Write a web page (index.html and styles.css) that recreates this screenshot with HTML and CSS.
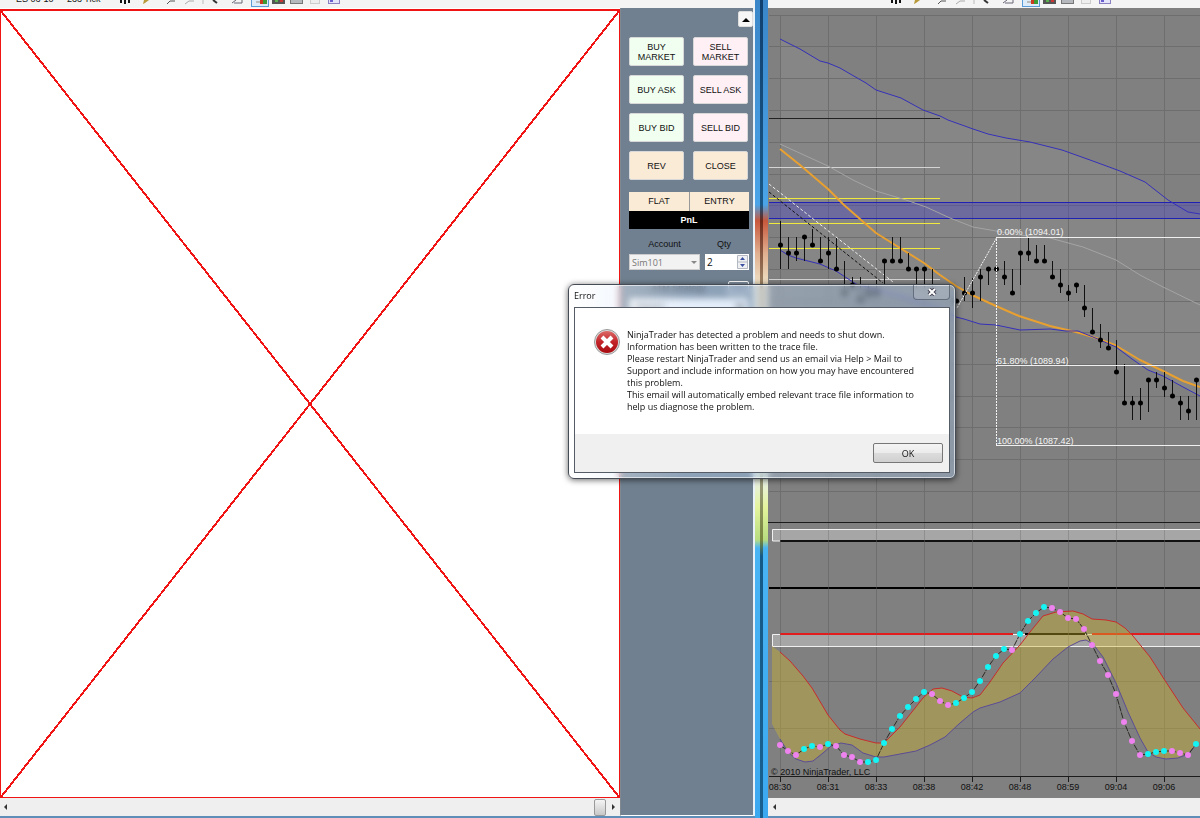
FILE: index.html
```html
<!DOCTYPE html>
<html lang="en">
<head>
  <meta charset="UTF-8" />
  <title>NinjaTrader</title>
  <meta name="viewport" content="width=device-width, initial-scale=1" />
  <link rel="stylesheet" href="styles.css">
</head>
<body>

  <svg class="defs" width="0" height="0" aria-hidden="true">
    <symbol id="tool-icons" viewBox="0 0 232 8">
      <path d="M3 0v3M7 0v4M11 0v3" stroke="#111" stroke-width="2" />
      <path d="M25 4l1-4h5l-4 3z" fill="#b89a3a" />
      <path d="M49 4l3-3h5" stroke="#555" fill="none" />
      <path d="M67 4l4-3h5" stroke="#aaa" fill="none" />
      <path d="M85 0v4" stroke="#bbb" />
      <path d="M95 0l4 3" stroke="#333" stroke-width="2" />
      <path d="M114 3l4-3M116 3h8V0" stroke="#667" fill="none" />
      <rect x="133.500" y="-4" width="17" height="10.500" fill="#dcecfb" stroke="#5b9bd8" />
      <path d="M138 1h5v2h-5z" fill="#bbb" /><path d="M142 0h3v4h-3z" fill="#cc3a22" /><path d="M145 0h4v4h-4z" fill="#3d9b35" />
      <rect x="154" y="-4" width="13" height="8" fill="#555" />
      <path d="M157 0h3v2h-3z" fill="#5bb050" /><path d="M162 0h3v2h-3z" fill="#c33" />
      <rect x="172.500" y="-4" width="12" height="7.500" fill="#b5b8bd" stroke="#777" />
      <rect x="192.500" y="-4" width="9" height="7.500" fill="#eee" stroke="#ccc" />
      <rect x="210.500" y="-4" width="11" height="7.500" fill="#e4e4fa" stroke="#8a80c0" />
      <path d="M212 1h3" stroke="#6a5fd0" stroke-width="2" />
    </symbol>
  </svg>

  <div class="desktop">

    <section class="window">
      <header class="toolbar">
        <span class="instrument">ES 06-10</span>
        <span class="interval">233 Tick</span>
        <svg class="tools" aria-hidden="true"><use href="#tool-icons" /></svg>
      </header>
      <div class="trader">
        <div class="chart-side">
          <svg class="broken-chart" viewBox="0 0 100 100" preserveAspectRatio="none" aria-hidden="true">
            <path d="M0 0L100 100M100 0L0 100" />
          </svg>
          <div class="scrollbar">
            <svg width="12" height="8"><path d="M7 1v6L4 4z" fill="#333" /></svg>
            <i class="thumb"></i>
            <svg width="12" height="8"><path d="M4 1v6l3-3z" fill="#333" /></svg>
          </div>
        </div>

        <aside class="panel">
          <button class="collapse" aria-label="Collapse"><svg width="8" height="5"><path d="M0 5l4-4 4 4z" /></svg></button>
          <div class="orders">
            <button class="buy">BUY<br>MARKET</button>
            <button class="sell">SELL<br>MARKET</button>
            <button class="buy">BUY ASK</button>
            <button class="sell">SELL ASK</button>
            <button class="buy">BUY BID</button>
            <button class="sell">SELL BID</button>
            <button class="exit">REV</button>
            <button class="exit">CLOSE</button>
          </div>
          <div class="position"><span>FLAT</span><span>ENTRY</span></div>
          <div class="pnl">PnL</div>
          <div class="fields">
            <label for="account">Account</label>
            <label for="qty">Qty</label>
            <div class="select-box">
              <select id="account" disabled><option>Sim101</option></select>
            </div>
            <div class="qty-box">
              <input type="text" id="qty" value="2" />
              <svg width="11" height="14" aria-hidden="true">
                <path d="M.5.500h10v13H.5zM0 7h11" fill="#eef0f4" stroke="#b4b8c0" />
                <path d="M3 5l2.500-3L8 5zM3 9l2.500 3L8 9z" fill="#3c50a0" />
              </svg>
            </div>
          </div>
          <div class="strategy">
            <label for="atm">ATM Strategy</label>
            <button class="small" aria-label="Strategy options"></button>
            <select id="atm"><option>&lt;None&gt;</option></select>
          </div>
        </aside>
      </div>
    </section>

    <div class="frame"><i></i></div>

    <section class="window">
      <header class="toolbar right">
        <svg class="tools" aria-hidden="true"><use href="#tool-icons" /></svg>
      </header>
      <svg class="chart" viewBox="768 8 432 790" preserveAspectRatio="xMinYMin slice">
        <!-- band between the upper and lower channel -->
        <path fill="#fff" opacity=".05" d="M780 39L820 61 840 68 876 90 901 98 923 110 940 116 973 129 1006 138 1030 142 1062 150 1090 160 1120 171 1145 182 1168 200 1188 212 1200 214V396L1163 376 1148 370 1116 347 1078 331 1020 330 980 324 956 317 856 284 820 264 780 250z" />

        <!-- grid -->
        <path class="grid" d="M780.500 15V777M828.500 15V777M876.500 15V777M924.500 15V777M972.500 15V777M1020.500 15V777M1068.500 15V777M1116.500 15V777M1164.500 15V777" />
        <path class="grid" d="M769 15.500H1200M769 46.500H1200M769 78.500H1200M769 110.500H1200M769 142.500H1200M769 174.500H1200M769 205.500H1200M769 237.500H1200M769 269.500H1200M769 301.500H1200M769 332.500H1200M769 364.500H1200M769 396.500H1200M769 427.500H1200M769 459.500H1200M769 491.500H1200M769 681.500H1200M769 728.500H1200" />

        <!-- price zone and session levels -->
        <rect x="769" y="202" width="431" height="17" fill="#4c46c0" opacity=".42" />
        <path d="M769 202.500H1200M769 218.500H1200" stroke="#2020b4" />
        <path d="M769 118.500H940" stroke="#222" />
        <path d="M769 167.500H940M769 279.500H940" stroke="#d4d4d4" />
        <path d="M769 198.500H940M769 223.500H940M769 248.500H940" stroke="#f0ea3c" />

        <path class="line" stroke="#a4a4a4" d="M780 144L793 150 828 166 853 180 876 191 906 200 926 207 950 218 973 227 996 231 1020 235 1050 238 1083 247 1116 260 1140 275 1163 287 1200 305" />
        <path class="line" stroke="#3530b8" d="M780 39L800 49 820 61 828 63 840 68 852 75 866 83 876 90 901 98 912 104 923 110 940 116 948 120 973 129 988 134 1006 138 1030 142 1046 146 1062 150 1090 160 1120 171 1145 182 1168 200 1188 212 1200 214" />
        <path class="line" stroke="#e8a030" stroke-width="2" d="M780 149L800 165 828 189 844 205 860 219 876 233 900 248 924 263 940 275 956 286 972 295 996 306 1019 316 1050 326 1076 332 1093 337 1115 345 1140 360 1163 371 1183 381 1200 387" />
        <path class="line" stroke="#3530b8" d="M780 250L788 255 796 258 808 261 820 264 836 271 856 284 900 296 943 310 956 317 964 319 980 324 996 325 1020 330 1050 329 1066 331 1078 331 1093 337 1116 347 1132 359 1148 370 1163 376 1183 387 1200 396" />
        <path d="M769 184L893 282" stroke="#eee" stroke-dasharray="3 2" />
        <path d="M769 192L883 283" stroke="#111" stroke-dasharray="3 2" />

        <!-- price bars -->
        <path stroke="#111" d="M780.500 221V269M788.500 237V269M796.500 237V261M804.500 237V261M812.500 229V246M820.500 237V261M828.500 237V269M836.500 238V269M844.500 261V293M852.500 277V290M860.500 277V300M868.500 284V300M876.500 280V296M884.500 261V284M892.500 237V261M900.500 237V261M908.500 253V269M916.500 269V290M924.500 269V290M932.500 269V295M964.500 277V301M972.500 278V308M980.500 269V301M988.500 269V285M1004.500 261V285M1012.500 269V293M1020.500 253V285M1028.500 238V261M1036.500 245V261M1044.500 245V261M1052.500 261V277M1060.500 269V293M1068.500 285V301M1076.500 285V293M1084.500 285V317M1092.500 308V332M1100.500 324V348M1108.500 332V348M1116.500 340V372M1124.500 364V403M1132.500 396V420M1140.500 388V420M1148.500 380V412M1156.500 372V388M1164.500 372V397M1172.500 380V396M1180.500 396V420M1188.500 396V420M1196.500 380V420" />
        <path class="dots bars" d="M780.500 245h0M788.500 253h0M796.500 253h0M804.500 237h0M812.500 245h0M820.500 261h0M828.500 253h0M836.500 269h0M844.500 293h0M852.500 285h0M860.500 300h0M868.500 293h0M876.500 293h0M884.500 261h0M892.500 261h0M900.500 261h0M908.500 269h0M916.500 269h0M924.500 269h0M956.500 301h0M964.500 293h0M972.500 293h0M980.500 277h0M988.500 269h0M996.500 269h0M1004.500 277h0M1012.500 293h0M1020.500 253h0M1028.500 253h0M1036.500 261h0M1044.500 261h0M1052.500 277h0M1060.500 285h0M1068.500 293h0M1076.500 285h0M1084.500 308h0M1092.500 332h0M1100.500 340h0M1108.500 348h0M1116.500 372h0M1124.500 403h0M1132.500 403h0M1140.500 403h0M1148.500 380h0M1156.500 380h0M1164.500 388h0M1172.500 396h0M1180.500 403h0M1188.500 411h0M1196.500 380h0" />

        <!-- retracement -->
        <path d="M996 237.500H1200M996 365.500H1200M996 445.500H1200" stroke="#f0f0f0" />
        <path d="M996.500 445V238L957 308" fill="none" stroke="#f4f4f4" stroke-dasharray="2 1" />
        <g class="fib">
          <text x="997" y="235">0.00% (1094.01)</text>
          <text x="997" y="364">61.80% (1089.94)</text>
          <text x="997" y="444">100.00% (1087.42)</text>
        </g>

        <!-- oscillator -->
        <path d="M768 522.500H1200" stroke="#1c1c1c" />
        <path d="M1202 529.500H772.500V541H1202z" fill="#a6a6a6" stroke="#f0f0f0" />
        <path d="M780 541H1200" stroke="#111" stroke-width="2" />
        <path d="M769 588H1200" stroke="#000" stroke-width="2" />
        <path d="M1202 634.500H772.500V646.500H1202z" fill="#a6a6a6" stroke="#f0f0f0" />
        <path d="M780 634H1013M1092 634H1200" stroke="#e01c1c" stroke-width="2" />
        <path d="M1025 634H1085" stroke="#000" stroke-width="2" />
        <path class="grid" d="M780.500 530V646M828.500 530V646M876.500 530V646M924.500 530V646M972.500 530V646M1020.500 530V646M1068.500 530V646M1116.500 530V646M1164.500 530V646" opacity=".4" />

        <path fill="#d0b728" fill-opacity=".4" d="M772 646L780 652 790 661 803 676 812 688 828 715 840 730 845 734 860 739 876 743 884 743 900 727 923 698 933 689 942 688 952 691 963 697 972 698 980 695 990 682 1003 663 1020 645 1030 632 1043 616 1056 612 1073 611 1083 614 1092 619 1106 620 1116 622 1125 628 1133 636 1150 657 1164 679 1183 708 1200 729V741L1196 745 1188 754 1178 758 1166 759 1156 757 1148 752 1140 738 1128 712 1116 683 1103 657 1093 644 1086 640 1080 641 1068 647 1053 659 1036 677 1020 693 1000 702 980 708 973 712 960 723 945 737 930 745 916 751 900 754 884 757 876 757 863 753 852 745 841 743 831 746 823 753 813 761 805 762 796 759 788 752 780 739 772 724z" />
        <path class="line" stroke="#c82c2c" d="M780 652L790 661 803 676 812 688 828 715 840 730 845 734 860 739 876 743 884 743 900 727 923 698 933 689 942 688 952 691 963 697 972 698 980 695 990 682 1003 663 1020 645 1030 632 1043 616 1056 612 1073 611 1083 614 1092 619 1106 620 1116 622 1125 628 1133 636 1150 657 1164 679 1183 708 1200 729" />
        <path class="line" stroke="#5c4c94" d="M780 739L788 752 796 759 805 762 813 761 823 753 831 746 841 743 852 745 863 753 876 757 884 757 900 754 916 751 930 745 945 737 960 723 973 712 980 708 1000 702 1020 693 1036 677 1053 659 1068 647 1080 641 1086 640 1093 644 1103 657 1116 683 1128 712 1140 738 1148 752 1156 757 1166 759 1178 758 1188 754 1196 745" />
        <path fill="none" stroke="#2c2a24" stroke-dasharray="6 1" d="M780 745L788 751 796 755 804 749 812 746 820 747 828 744 836 746 844 755 852 757 860 762 868 762 876 760 884 743 892 729 900 716 908 707 916 699 924 692 932 694 940 701 948 705 956 703 964 698 972 692 980 681 988 667 996 656 1004 649 1012 650 1020 634 1028 621 1036 613 1044 607 1052 608 1060 612 1068 618 1076 619 1084 629 1092 645 1100 661 1108 675 1116 694 1124 722 1132 741 1140 755 1148 754 1156 752 1164 751 1172 751 1180 753 1188 755 1196 744" />
        <path class="dots" stroke="#14f4f4" d="M804 749h0M812 746h0M828 744h0M868 762h0M876 760h0M884 743h0M892 729h0M900 716h0M908 707h0M916 699h0M924 692h0M956 703h0M964 698h0M972 692h0M980 681h0M988 667h0M996 656h0M1004 649h0M1020 634h0M1028 621h0M1036 613h0M1044 607h0M1148 754h0M1156 752h0M1164 751h0M1196 744h0" />
        <path class="dots" stroke="#ee82ee" d="M780 745h0M788 751h0M796 755h0M820 747h0M836 746h0M844 755h0M852 757h0M860 762h0M932 694h0M940 701h0M948 705h0M1012 650h0M1052 608h0M1060 612h0M1068 618h0M1076 619h0M1084 629h0M1092 645h0M1100 661h0M1108 675h0M1116 694h0M1124 722h0M1132 741h0M1140 755h0M1172 751h0M1180 753h0M1188 755h0" />

        <!-- time axis -->
        <path d="M769 776.500H1200M780.500 777v5M828.500 777v5M876.500 777v5M924.500 777v5M972.500 777v5M1020.500 777v5M1068.500 777v5M1116.500 777v5M1164.500 777v5" stroke="#1c1c1c" />
        <text x="771" y="775">© 2010 NinjaTrader, LLC</text>
        <g text-anchor="middle">
          <text x="780" y="790">08:30</text>
          <text x="828" y="790">08:31</text>
          <text x="876" y="790">08:33</text>
          <text x="924" y="790">08:38</text>
          <text x="972" y="790">08:42</text>
          <text x="1020" y="790">08:48</text>
          <text x="1068" y="790">08:59</text>
          <text x="1116" y="790">09:04</text>
          <text x="1164" y="790">09:06</text>
        </g>
      </svg>
      <div class="scrollbar">
        <svg width="12" height="8"><path d="M8 1v6L5 4z" fill="#333" /></svg>
      </div>
    </section>
  </div>

  <div class="error-dialog" role="alertdialog" aria-labelledby="errorTitle" aria-describedby="errorText">
    <div class="title-bar">
      <span id="errorTitle">Error</span>
      <button class="close" aria-label="Close">
        <svg width="10" height="8"><path d="M2 1l6 6M8 1L2 7" stroke="#445" stroke-width="4" /><path d="M2 1l6 6M8 1L2 7" stroke="#fff" stroke-width="2" /></svg>
      </button>
    </div>
    <div class="dialog-body">
      <div class="message">
        <svg width="26" height="26" viewBox="0 0 26 26" aria-hidden="true">
          <defs>
            <linearGradient id="red" x1="0" y1="0" x2="0" y2="1">
              <stop offset="0" stop-color="#dc6a68" /><stop offset=".5" stop-color="#c22428" /><stop offset="1" stop-color="#a80c10" />
            </linearGradient>
          </defs>
          <circle cx="13" cy="13" r="12.500" fill="#dcdcdc" stroke="#999" />
          <circle cx="13" cy="13" r="11" fill="url(#red)" />
          <path d="M8 8l10 10M18 8L8 18" stroke="#fff" stroke-width="4" />
        </svg>
        <p id="errorText">NinjaTrader has detected a problem and needs to shut down.<br>
          Information has been written to the trace file.<br>
          Please restart NinjaTrader and send us an email via Help &gt; Mail to<br>
          Support and include information on how you may have encountered<br>
          this problem.<br>
          This email will automatically embed relevant trace file information to<br>
          help us diagnose the problem.</p>
      </div>
      <div class="actions"><button class="ok">OK</button></div>
    </div>
  </div>

</body>
</html>
```

FILE: styles.css
```css
* { box-sizing: border-box; }
html, body {
  margin: 0; padding: 0;
  background: #fff;
  font-family: "Liberation Sans", Arial, sans-serif;
  font-size: 9px; color: #111;
}
button, select, input { font: inherit; color: inherit; padding: 0; }
svg { display: block; }
.defs { position: absolute; }

.desktop {
  display: grid; height: 100vh;
  grid-template-columns: minmax(0, 755fr) 13px minmax(0, 432fr);
}
.window {
  display: flex; flex-direction: column;
  min-height: 0; border-bottom: 2px solid #5f8fb8;
}

/* toolbar, only its lower edge is on screen */
.toolbar {
  display: flex; align-items: flex-end;
  height: 8px; flex: none; overflow: hidden;
  padding-left: 16px;
  background: #f4f4f4;
}
.instrument, .interval {
  width: 51px; line-height: 12px;
  padding-bottom: 3px; white-space: nowrap;
}
.tools { width: 232px; height: 8px; flex: none; }
.toolbar.right { padding-left: 121px; }

.trader {
  display: grid; flex: 1; min-height: 0;
  grid-template-columns: minmax(0, 1fr) 133px;
  border-right: 2px solid #e8f0f8;
}
.chart-side { display: flex; flex-direction: column; min-height: 0; }
.broken-chart {
  flex: 1; min-height: 0; width: 100%;
  background: #fff;
  border: 1px solid #f01414; border-top-width: 2px;
  margin-top: 1px;
}
.broken-chart path {
  stroke: #f01414; stroke-width: 2px; fill: none;
  vector-effect: non-scaling-stroke;
  shape-rendering: crispEdges;
}
.scrollbar {
  display: flex; align-items: center;
  height: 18px; flex: none;
  background: #efefef;
}
.thumb {
  width: 12px; height: 17px;
  margin: 0 2px 0 auto;
  border: 1px solid #999; border-radius: 2px;
  background: linear-gradient(#f4f4f4, #c8c8c8);
}

.panel {
  background: #708090;
  padding: 3px 4px 0 8px;
  border-left: 1px solid #808890;
  border-bottom: 1px solid #fff;
}
.collapse {
  display: flex; align-items: center; justify-content: center;
  width: 15px; height: 16px;
  margin: 0 -4px 10px auto;
  border: 1px solid #ddd; border-radius: 2px;
  background: #f6f6f6;
}
.orders {
  display: grid; grid-template-columns: 1fr 1fr;
  gap: 9px; margin-right: 1px;
}
.orders button {
  height: 29px; line-height: 10px;
  border: 1px solid #d8d8d8; border-radius: 2px;
}
.orders .buy { background: #f0fff0; }
.orders .sell { background: #fff0f5; }
.orders .exit { background: #faebd7; }
.position {
  display: grid; grid-template-columns: 1fr 1fr;
  margin-top: 12px;
  background: #faebd7;
  text-align: center; line-height: 19px;
}
.position span + span { border-left: 1px solid #999; }
.pnl {
  background: #000; color: #fff;
  font-weight: bold; text-align: center;
  line-height: 18px;
}
.fields {
  display: grid; grid-template-columns: 71px minmax(0, 1fr);
  column-gap: 5px; row-gap: 4px;
  margin-top: 9px;
}
.fields label { text-align: center; line-height: 12px; }
.fields label + label { padding-right: 6px; }
.select-box, .qty-box {
  display: flex; align-items: center;
  height: 16px; background: #fff;
  font-family: "Open Sans", sans-serif;
}
.select-box { position: relative; }
.select-box::after {
  content: ""; position: absolute; right: 3px; top: 7px;
  border: 3px solid transparent; border-top-color: #888;
}
.select-box select {
  appearance: none; width: 100%; height: 16px;
  border: 1px solid #ccc; background: #f2f2f2;
  color: #777; padding-left: 2px;
  opacity: 1;
}
.qty-box { padding-right: 1px; }
.qty-box svg { flex: none; }
.qty-box input {
  flex: 1; min-width: 0; height: 16px;
  border: 0; padding-left: 2px;
  background: transparent; font-size: 10px;
}
.strategy {
  display: grid; grid-template-columns: 1fr 21px;
  row-gap: 3px; margin-top: 11px;
}
.strategy label { text-align: center; line-height: 14px; }
.strategy .small { border: 1px solid #fff; background: #8090a0; border-radius: 2px; }
.strategy select {
  grid-column: span 2; height: 16px;
  border: 1px solid #ccc; background: #fff;
}

/* coloured glass edge between the two windows */
.frame {
  display: flex; justify-content: center;
  background: linear-gradient(#3a86c8, #4ba4e8 25%, #c8583c 27%, #e0b090 31%, #f0e4c8 35%, #e8f0e0 59%, #e4f49c 62%, #b8dc80 66%, #48b4f4 67%, #3ca8f0);
}
.frame i {
  width: 3px; margin-right: 1px;
  background: linear-gradient(#104070, #185888 25%, #702818 27%, #a08868 35%, #989878 59%, #78883c 66%, #145a88 68%, #186090);
}

.chart { flex: 1; min-height: 0; width: 100%; background: #808080; }
.chart text { font-size: 9px; fill: #111; }
.chart .fib text { fill: #f4f4f4; }
.grid { stroke: #6e6e6e; fill: none; }
.line { fill: none; stroke-linejoin: round; }
.dots { stroke-width: 6px; stroke-linecap: round; }
.dots.bars { stroke: #000; stroke-width: 5px; }

.error-dialog {
  position: absolute; left: 568px; top: 284px;
  width: 388px; padding: 0 5px 5px;
  border: 1px solid #454c55; border-radius: 6px;
  background: linear-gradient(90deg, rgba(255, 255, 255, .5), rgba(190, 215, 245, .4) 30%, rgba(160, 190, 225, .4));
  backdrop-filter: blur(3px);
  box-shadow: inset 0 0 0 1px rgba(255, 255, 255, .6), 0 1px 6px rgba(0, 0, 0, .6);
  font-family: "Open Sans", sans-serif;
}
.title-bar {
  display: flex; justify-content: space-between;
  height: 22px; line-height: 22px;
}
.close {
  display: flex; align-items: center; justify-content: center;
  width: 37px; height: 15px;
  border: 1px solid rgba(60, 70, 85, .6); border-top: 0;
  border-radius: 0 0 4px 4px;
  background: rgba(255, 255, 255, .15);
}
.dialog-body { border: 1px solid #555c66; background: #fff; }
.message {
  display: flex; gap: 7px;
  padding: 21px 20px 21px 19px;
}
.message p { margin: 0; line-height: 12px; white-space: nowrap; }
.actions {
  display: flex; justify-content: flex-end;
  padding: 9px 6px;
  background: #f0f0f0;
}
.ok {
  width: 70px; height: 20px;
  border: 1px solid #777; border-radius: 2px;
  background: linear-gradient(#f4f4f4, #ebebeb 50%, #dcdcdc 50%, #d0d0d0);
}
```
